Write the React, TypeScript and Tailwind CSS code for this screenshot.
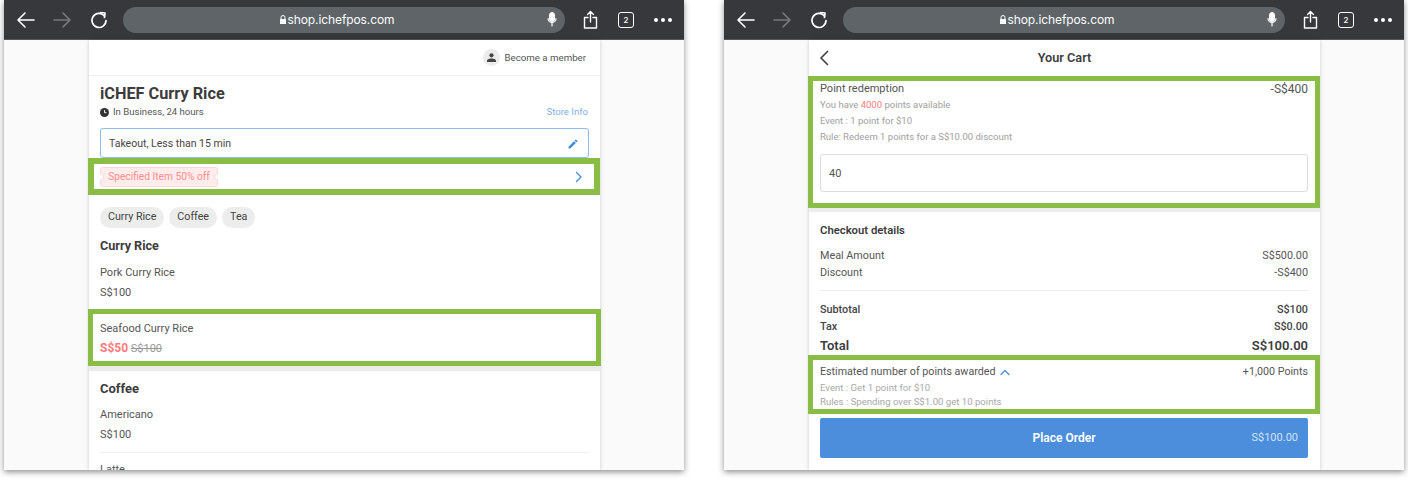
import React from "react";

const Toolbar = () => (
  <div className="h-10 shrink-0 bg-[#36383c] flex items-center text-white border-b border-[#55575a]">
    <svg width="20" height="18" viewBox="0 0 20 18" className="ml-[12px] shrink-0" fill="none" stroke="#fff" strokeWidth="1.6" strokeLinecap="round" strokeLinejoin="round"><path d="M2 9h16M9 2 2 9l7 7" /></svg>
    <svg width="20" height="18" viewBox="0 0 20 18" className="ml-[16px] shrink-0" fill="none" stroke="#77797c" strokeWidth="1.6" strokeLinecap="round" strokeLinejoin="round"><path d="M2 9h16M11 2l7 7-7 7" /></svg>
    <svg width="18" height="18" viewBox="0 0 18 18" className="ml-[18px] shrink-0" fill="none" stroke="#fff" strokeWidth="1.7" strokeLinecap="round" strokeLinejoin="round"><path d="M14.4 5A7 7 0 1 0 16 9.500" /><path d="M10.500 1.500 15 2l-.5 4.500" /></svg>
    <div className="ml-[15px] w-[442px] h-[26px] rounded-[13px] bg-[#5e6468] shrink-0 flex items-center relative justify-center pr-[14px]">
      <svg width="6" height="9" viewBox="0 0 6 9" className="mr-[2px]" fill="#fff"><path d="M0 4h6v5H0z" /><path d="M1 4V2.500a2 2 0 0 1 4 0V4" fill="none" stroke="#fff" strokeWidth="1" /></svg>
      <span className="text-[12px] text-white leading-none font-['Inter',sans-serif] tracking-[-0.1px]">shop.ichefpos.com</span>
      <svg width="10" height="15" viewBox="0 0 10 15" className="absolute right-[8px] top-[5px]" fill="none" stroke="#fff" strokeLinecap="round"><rect x="2.500" y="0.500" width="5" height="9" rx="2.500" fill="#fff" /><path d="M1 6.500a4 4 0 0 0 8 0M5 11v3" strokeWidth="1.2" /></svg>
    </div>
    <svg width="15" height="19" viewBox="0 0 15 19" className="ml-[18px] shrink-0" fill="none" stroke="#fff" strokeWidth="1.4" strokeLinecap="round" strokeLinejoin="round"><path d="M7.500 12V1.500M4.500 4.500l3-3 3 3M5 7.500H1.500V18h12V7.500H10" /></svg>
    <div className="ml-[20px] w-[16px] h-[16px] rounded-[3px] border-[1.5px] border-white flex items-center justify-center text-[8px] font-medium font-['Inter',sans-serif] shrink-0">2</div>
    <div className="ml-[20px] flex gap-[3px] shrink-0">
      <span className="w-[4px] h-[4px] rounded-full bg-white" />
      <span className="w-[4px] h-[4px] rounded-full bg-white" />
      <span className="w-[4px] h-[4px] rounded-full bg-white" />
    </div>
  </div>
);

const Window = ({ children }: { children: React.ReactNode }) => (
  <div className="w-[680px] h-[470px] shrink-0 flex flex-col bg-[#fafafa] shadow-[0_2px_6px_rgba(0,0,0,0.45)] overflow-hidden">
    <Toolbar />
    <div className="flex-1 min-h-0 pl-[85px]">
      <div className="w-[511px] h-full bg-white shadow-[0_0_4px_rgba(0,0,0,0.2)] flex flex-col">{children}</div>
    </div>
  </div>
);

const Green = ({ className, children }: { className: string; children: React.ReactNode }) => (
  <div className={`border-[#8abd45] bg-white shrink-0 relative z-10 ${className}`}>{children}</div>
);

const Chip = ({ label }: { label: string }) => (
  <span className="h-[21px] px-[8px] rounded-full bg-[#ededed] flex items-center text-[10.700px] text-[#444]">{label}</span>
);

const Left = () => (
  <Window>
    <div className="h-9 shrink-0 flex items-center justify-end pr-[14px] border-b border-[#eeeeee]">
      <span className="w-[17px] h-[17px] rounded-full bg-[#ebebeb] flex items-center justify-center mr-[5px]">
        <svg width="9" height="9" viewBox="0 0 9 9" fill="#444"><circle cx="4.500" cy="2.300" r="2.100" /><path d="M0 9V7.600C0 6 3 5.400 4.500 5.400S9 6 9 7.600V9z" /></svg>
      </span>
      <span className="text-[9.700px] text-[#555] pt-px">Become a member</span>
    </div>
    <div className="h-[52px] shrink-0 px-[11px]">
      <div className="pt-[8px] text-[16.300px] leading-[20px] font-bold text-[#3c3c3c]">iCHEF Curry Rice</div>
      <div className="mt-[1px] flex items-center text-[9.600px] leading-[14px] text-[#555]">
        <svg width="9" height="9" viewBox="0 0 9 9" className="mr-[4px]"><circle cx="4.500" cy="4.500" r="4.500" fill="#333" /><path d="M4.500 2v2.700h2" stroke="#fff" strokeWidth="0.9" fill="none" /></svg>
        <span className="flex-1">In Business, 24 hours</span>
        <span className="text-[#7fb0e8] text-[9.600px] mr-[1px]">Store Info</span>
      </div>
    </div>
    <div className="mx-[11px] h-[30px] shrink-0 rounded-[3px] border border-[#8fbdee] flex items-center justify-between pl-[8px] pr-[9px] pt-px text-[10.500px] text-[#444]">
      <span>Takeout, Less than 15 min</span>
      <svg width="12" height="12" viewBox="0 0 24 24" fill="#4a90d9"><path d="M3 17.250V21h3.750L17.810 9.940l-3.750-3.750L3 17.250zM20.710 7.040a1 1 0 0 0 0-1.410l-2.340-2.340a1 1 0 0 0-1.410 0l-1.830 1.830 3.750 3.750 1.830-1.830z" /></svg>
    </div>
    <Green className="border-[6px] h-[37px] -ml-[1px] w-[512px] flex items-center justify-between pl-[6px] pr-[11px]">
      <span className="relative h-[20px] w-[118px] flex items-center justify-center text-[10.200px] text-[#ff8b8b] whitespace-nowrap">
        <svg width="118" height="20" viewBox="0 0 118 20" className="absolute left-0 top-0" fill="#ffeded" stroke="#ffd6d6"><path d="M2.500.500h113a2 2 0 0 1 2 2V7a3 3 0 0 0 0 6v4.500a2 2 0 0 1-2 2H2.500a2 2 0 0 1-2-2V13a3 3 0 0 0 0-6V2.500a2 2 0 0 1 2-2z" /></svg>
        <span className="relative">Specified Item 50% off</span>
      </span>
      <svg width="8" height="12" viewBox="0 0 8 12" fill="none" stroke="#4a90d9" strokeWidth="1.4" strokeLinecap="round" strokeLinejoin="round"><path d="M1.500 1.500 6 6l-4.500 4.500" /></svg>
    </Green>
    <div className="flex gap-[5px] px-[11px] pt-[12px] shrink-0">
      <Chip label="Curry Rice" />
      <Chip label="Coffee" />
      <Chip label="Tea" />
    </div>
    <div className="px-[11px] pt-[10px] h-[34px] text-[12.600px] leading-[16px] font-bold text-[#3c3c3c] shrink-0">Curry Rice</div>
    <div className="px-[11px] pt-px text-[11px] leading-[20px] text-[#555] shrink-0 h-[40px]">
      <div className="h-[20px]">Pork Curry Rice</div>
      <div className="h-[19px]">S$100</div>
    </div>
    <Green className="border-[5px] -ml-[1px] w-[513px] h-[57px] mt-[7px] pl-[7px] pt-[5px] text-[11px] leading-[20px] text-[#555]">
      <div className="h-[19px]">Seafood Curry Rice</div>
      <div>
        <span className="font-bold text-[12px] text-[#ff7b7b]">S$50</span>{" "}
        <span className="line-through text-[#999]">S$100</span>
      </div>
    </Green>
    <div className="h-[5px] shrink-0 bg-[#ebebeb]" />
    <div className="px-[11px] pt-[10px] h-[32px] text-[13px] leading-[16px] font-bold text-[#3c3c3c] shrink-0">Coffee</div>
    <div className="px-[11px] pt-[2px] text-[11px] leading-[20px] text-[#555] shrink-0">
      <div className="h-[20px]">Americano</div>
      <div className="h-[20px]">S$100</div>
      <div className="h-px bg-[#eeeeee] mt-[7px]" />
      <div className="h-[20px] mt-[7px]">Latte</div>
    </div>
  </Window>
);

const Row = ({ l, r, bold }: { l: string; r: string; bold?: boolean }) => (
  <div className={`h-[17.500px] flex items-center justify-between text-[10.800px] ${bold ? "font-medium text-[#444]" : "text-[#555]"}`}>
    <span>{l}</span>
    <span>{r}</span>
  </div>
);

const Right = () => (
  <Window>
    <div className="h-9 shrink-0 relative flex items-center justify-center text-[12.700px] font-semibold text-[#3c3c3c]">
      <svg width="10" height="16" viewBox="0 0 10 16" className="absolute left-[10px] top-[10px]" fill="none" stroke="#444" strokeWidth="1.7" strokeLinecap="round" strokeLinejoin="round"><path d="M8.500 1.500 2 8l6.500 6.500" /></svg>
      Your Cart
    </div>
    <Green className="border-[5px] -ml-[1px] w-[512px] h-[132px] pl-[7px] pr-[6px] pt-px text-[#555]">
      <div className="flex justify-between text-[11px] leading-[14px]">
        <span>Point redemption</span>
        <span className="mr-px text-[12px]">-S$400</span>
      </div>
      <div className="pt-px text-[9.500px] leading-[16px] text-[#a0a0a0]">
        <div>You have <span className="text-[#ff7b7b]">4000</span> points available</div>
        <div>Event : 1 point for $10</div>
        <div>Rule: Redeem 1 points for a S$10.00 discount</div>
      </div>
      <div className="mt-[9px] mr-px h-[38px] rounded-[3px] border border-[#dcdcdc] flex items-center pl-[8px] pt-[2px] text-[11px]">40</div>
    </Green>
    <div className="h-[4px] shrink-0 bg-[#ededed]" />
    <div className="pl-[11px] pr-[12px] flex-1 min-h-0">
      <div className="pt-[11px] text-[11.300px] leading-[15px] font-semibold text-[#3c3c3c]">Checkout details</div>
      <div className="pt-[9px]">
        <Row l="Meal Amount" r="S$500.00" />
        <Row l="Discount" r="-S$400" />
      </div>
      <div className="h-px bg-[#eeeeee] mt-[8px] mb-[10px]" />
      <Row l="Subtotal" r="S$100" bold />
      <Row l="Tax" r="S$0.00" bold />
      <div className="h-[19px] flex items-center justify-between text-[13px] font-semibold text-[#3c3c3c]">
        <span>Total</span>
        <span>S$100.00</span>
      </div>
    </div>
    <Green className="border-[5px] -ml-[1px] w-[512px] h-[59px] pl-[7px] pr-[6px] pt-[5px] text-[#555]">
      <div className="flex justify-between text-[10.700px] leading-[14px]">
        <span className="flex items-center">
          Estimated number of points awarded
          <svg width="10" height="7" viewBox="0 0 10 7" className="ml-[5px]" fill="none" stroke="#4a90d9" strokeWidth="1.4" strokeLinecap="round" strokeLinejoin="round"><path d="M1 5.500 5 1.500l4 4" /></svg>
        </span>
        <span className="mr-px">+1,000 Points</span>
      </div>
      <div className="mt-[2px] text-[9.600px] leading-[13.500px] text-[#a8a8a8]">
        <div>Event : Get 1 point for $10</div>
        <div>Rules : Spending over S$1.00 get 10 points</div>
      </div>
    </Green>
    <div className="pl-[11px] pr-[12px] pt-[4px] pb-[12px] shrink-0">
      <div className="h-[40px] rounded-[2px] bg-[#4c8edb] relative flex items-center justify-center text-white text-[12px] font-semibold">
        Place Order
        <span className="absolute right-[10px] top-[13px] text-[11px] leading-[14px] font-normal text-[#cfe2f8]">S$100.00</span>
      </div>
    </div>
  </Window>
);

export default function App() {
  return (
    <div className="w-[1408px] h-[479px] overflow-hidden bg-white flex gap-10 pl-1 font-['Roboto',sans-serif]">
      <Left />
      <Right />
    </div>
  );
}
